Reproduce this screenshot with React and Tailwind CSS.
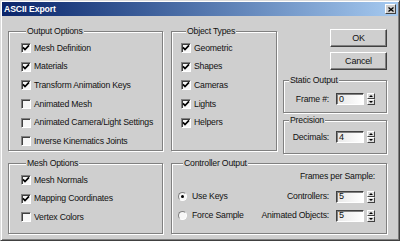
import React from "react";

function Check({ checked }) {
  return (
    <span className="flex h-[10px] w-[10px] shrink-0 items-center justify-center border border-[#808080] border-b-white border-r-white bg-[#f7f7f7] shadow-[inset_1px_1px_0_#404040]">
      {checked && (
        <svg width="8" height="8" viewBox="0 0 8 8">
          <path d="M1 3.4 L3 5.5 L7 1.4" fill="none" stroke="#000" strokeWidth="1.7" />
        </svg>
      )}
    </span>
  );
}

function CheckRow({ label, checked }) {
  return (
    <div className="flex h-[18.6px] items-center gap-[3px]">
      <Check checked={checked} />
      <span>{label}</span>
    </div>
  );
}

function Radio({ label, selected }) {
  return (
    <div className="flex h-[19px] items-center gap-[5px]">
      <span className="flex h-[9px] w-[9px] items-center justify-center rounded-full border border-[#808080] border-b-white border-r-white bg-[#f7f7f7]">
        {selected && <span className="h-[3px] w-[3px] rounded-full bg-black" />}
      </span>
      <span>{label}</span>
    </div>
  );
}

function Group({ title, className, children }) {
  return (
    <fieldset className={`border border-[#808080] shadow-[inset_1px_1px_0_#fff,1px_1px_0_#fff] ${className}`}>
      <legend className="ml-[5px] bg-[#cfcfcf] px-[1px] leading-[11px]">{title}</legend>
      {children}
    </fieldset>
  );
}

function Spinner() {
  return (
    <div className="flex h-[12px] w-[8px] flex-col">
      <span className="flex h-[6px] items-center justify-center border border-white border-r-[#404040] border-b-[#404040] bg-[#dcdcdc]">
        <svg width="4" height="2" viewBox="0 0 4 2"><path d="M0 2 L2 0 L4 2 Z" fill="#000" /></svg>
      </span>
      <span className="flex h-[6px] items-center justify-center border border-white border-r-[#404040] border-b-[#404040] bg-[#dcdcdc]">
        <svg width="4" height="2" viewBox="0 0 4 2"><path d="M0 0 L2 2 L4 0 Z" fill="#000" /></svg>
      </span>
    </div>
  );
}

function NumField({ label, value }) {
  return (
    <div className="flex items-center justify-end">
      <span>{label}</span>
      <span className="ml-[7px] flex h-[12px] w-[28px] items-center border border-[#404040] border-b-white border-r-white bg-gradient-to-r from-[#e8e8e8] to-white pl-[2px] text-[9px] leading-none shadow-[inset_1px_1px_0_#808080]">
        {value}
      </span>
      <span className="ml-[3px]">
        <Spinner />
      </span>
    </div>
  );
}

export default function App() {
  return (
    <div className="flex h-[241px] w-[400px] flex-col whitespace-nowrap border border-[#dcdcdc] border-b-[#404040] border-r-[#404040] bg-[#cfcfcf] p-[1px] font-['Liberation_Sans',Arial,sans-serif] text-[8.7px] leading-[11px] tracking-[-0.2px] text-[#111] shadow-[inset_1px_1px_0_#fff,inset_-1px_-1px_0_#808080]">
      <div className="flex h-[14px] items-center justify-between bg-gradient-to-r from-[#0a246a] to-[#a6caf0] pl-[2px] pr-[2px]">
        <span className="text-[8.7px] font-bold tracking-[-0.1px] text-white">ASCII Export</span>
        <span className="flex h-[10px] w-[11px] items-center justify-center border border-white border-b-[#404040] border-r-[#404040] bg-[#cfcfcf]">
          <svg width="6" height="5" viewBox="0 0 6 5">
            <path d="M0.5 0.5 L5.5 4.5 M5.5 0.5 L0.5 4.5" stroke="#000" strokeWidth="1.3" />
          </svg>
        </span>
      </div>

      <div className="flex flex-col pl-[6px] pt-[10px]">
        <div className="flex items-start">
          <Group title="Output Options" className="h-[125px] w-[155px] pl-[12px] pt-[2px]">
            <CheckRow label="Mesh Definition" checked />
            <CheckRow label="Materials" checked />
            <CheckRow label="Transform Animation Keys" checked />
            <CheckRow label="Animated Mesh" />
            <CheckRow label="Animated Camera/Light Settings" />
            <CheckRow label="Inverse Kinematics Joints" />
          </Group>

          <Group title="Object Types" className="ml-[8px] h-[125px] w-[106px] pl-[9px] pt-[2px]">
            <CheckRow label="Geometric" checked />
            <CheckRow label="Shapes" checked />
            <CheckRow label="Cameras" checked />
            <CheckRow label="Lights" checked />
            <CheckRow label="Helpers" checked />
          </Group>

          <div className="ml-[6px] flex w-[104px] flex-col">
            <button className="mt-[3px] flex h-[18px] w-[57px] items-center justify-center self-end border border-white border-b-[#404040] border-r-[#404040] bg-[#cfcfcf] text-[9px] shadow-[inset_-1px_-1px_0_#808080]">
              OK
            </button>
            <button className="mt-[5px] flex h-[18px] w-[57px] items-center justify-center self-end border border-white border-b-[#404040] border-r-[#404040] bg-[#cfcfcf] text-[9px] shadow-[inset_-1px_-1px_0_#808080]">
              Cancel
            </button>
            <Group title="Static Output" className="mt-[5px] h-[38px] pr-[11px] pt-[7px]">
              <NumField label="Frame #:" value="0" />
            </Group>
            <Group title="Precision" className="mt-[2px] h-[39px] pr-[11px] pt-[5px]">
              <NumField label="Decimals:" value="4" />
            </Group>
          </div>
        </div>

        <div className="mt-[4px] flex items-start">
          <Group title="Mesh Options" className="h-[76px] w-[155px] pl-[12px] pt-[2px]">
            <CheckRow label="Mesh Normals" checked />
            <CheckRow label="Mapping Coordinates" checked />
            <CheckRow label="Vertex Colors" />
          </Group>

          <Group title="Controller Output" className="ml-[8px] h-[76px] w-[216px] pl-[6px] pr-[11px] pt-[2px]">
            <div className="flex justify-end">Frames per Sample:</div>
            <div className="mt-[5px] flex justify-between">
              <div className="flex flex-col">
                <Radio label="Use Keys" selected />
                <Radio label="Force Sample" />
              </div>
              <div className="flex flex-col">
                <div className="flex h-[19px] items-center justify-end">
                  <NumField label="Controllers:" value="5" />
                </div>
                <div className="flex h-[19px] items-center justify-end">
                  <NumField label="Animated Objects:" value="5" />
                </div>
              </div>
            </div>
          </Group>
        </div>
      </div>
    </div>
  );
}
